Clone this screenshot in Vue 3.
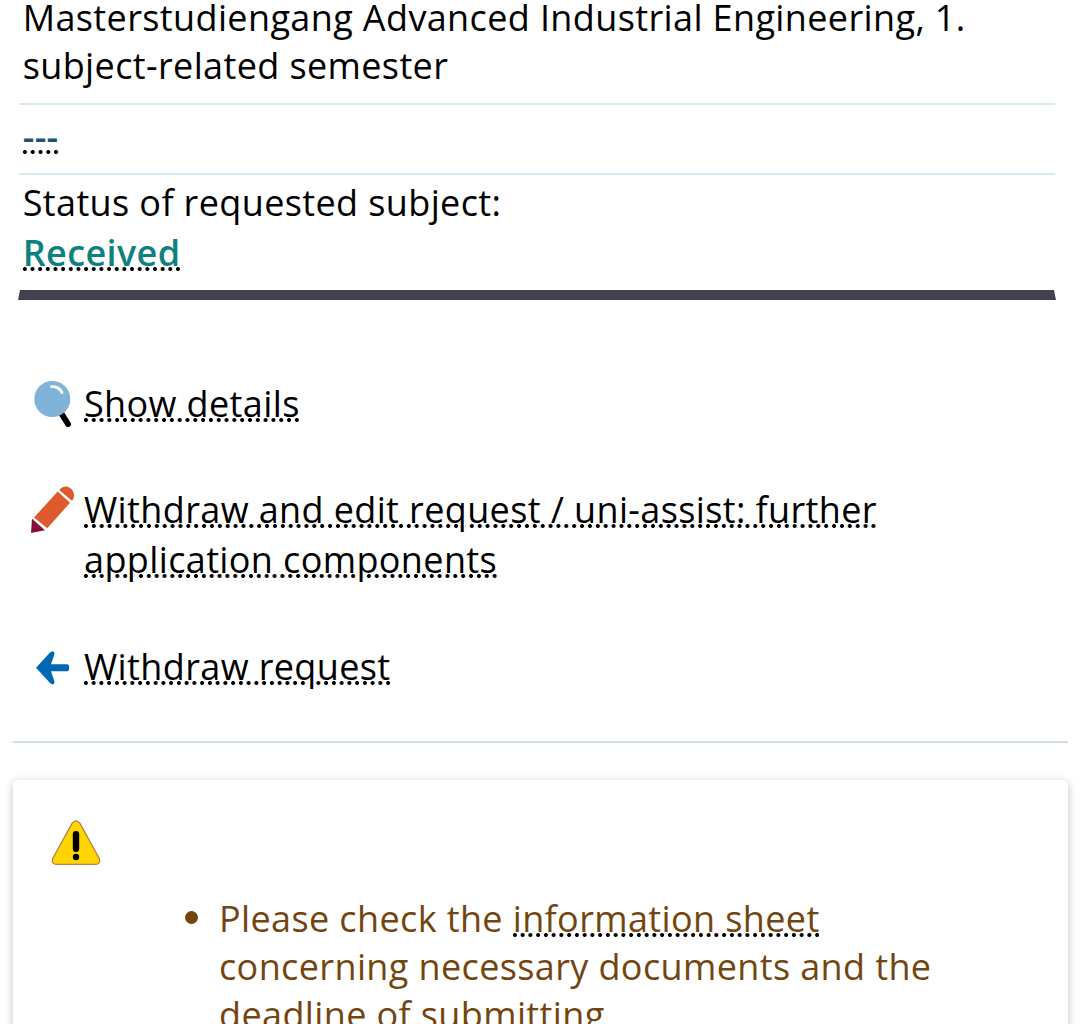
<script setup>
const actions = [
  { icon: 'search', label: 'Show details' },
  { icon: 'edit', label: 'Withdraw and edit request / uni-assist: further application components' },
  { icon: 'back', label: 'Withdraw request' }
];
</script>

<template>
  <main class="page">
    <section class="request">
      <div class="row subject">Masterstudiengang Advanced Industrial Engineering, 1. subject-related semester</div>
      <div class="row empty"><span class="dotted">---</span></div>
      <div class="row status">
        <div>Status of requested subject:</div>
        <div class="state"><span class="dotted">Received</span></div>
      </div>
    </section>

    <ul class="actions">
      <li v-for="action in actions" :key="action.icon" class="action">
        <svg v-if="action.icon === 'search'" class="icon" width="50" height="58" viewBox="0 0 50 58">
          <path d="M33 42l7 11" stroke="#000" stroke-width="6" stroke-linecap="round" />
          <circle cx="24.300" cy="28" r="18" fill="#80b3d8" />
          <path d="M23.500 15.500q7.500 0 10.500 6" stroke="#fff" stroke-width="3" stroke-linecap="round" fill="none" />
        </svg>
        <svg v-else-if="action.icon === 'edit'" class="icon" width="50" height="58" viewBox="0 0 50 58">
          <path d="M6 40.500L29.700 14.500 42 25.800 19.300 51.200z" fill="#dc5a2c" />
          <path d="M31.300 13C34 9.500 38.500 8.500 42 11C46 13.500 47 18.500 45 22.500Q44.300 23.800 43.300 23.200z" fill="#dc5a2c" />
          <path d="M4 41.800L17 53.200 3 56z" fill="#8b0a3d" />
        </svg>
        <svg v-else class="icon" width="50" height="58" viewBox="0 0 50 58">
          <path d="M8 33.700L22 18.500Q26.500 15.500 26.500 20L23 30.200H39Q41 30.200 41 32V35.500Q41 37.300 39 37.300H23L26.500 47.500Q26.500 52 22 49Z" fill="#0069b4" />
        </svg>
        <div class="label"><a class="dotted">{{ action.label }}</a></div>
      </li>
    </ul>

    <hr class="divider" />

    <section class="notice">
      <svg class="warning" width="50" height="46" viewBox="0 0 50 46">
        <path d="M21.200 3.200Q25-1.500 28.800 3.200L48.300 38.500Q50 44 45 44.300H5Q0 44 1.700 38.500Z" fill="#ffd500" stroke="#b58247" stroke-width="1.300" />
        <path d="M25 14.200v14.500" stroke="#000" stroke-width="6.400" stroke-linecap="round" />
        <circle cx="25" cy="37" r="3.200" />
      </svg>
      <ul class="hints">
        <li>Please check the <a class="dotted">information sheet</a> concerning necessary documents and the deadline of submitting</li>
      </ul>
    </section>
  </main>
</template>

<style>
body {
  margin: 0;
  background: #fff;
}
</style>

<style scoped>
.page {
  height: 1024px;
  overflow: hidden;
  box-sizing: border-box;
  font-family: "Open Sans", sans-serif;
  font-size: 36px;
  line-height: 48px;
  letter-spacing: 0.38px;
  color: #000;
  display: flow-root;
}

.request {
  margin: -6px 24px 0 18px;
  border: 2px solid transparent;
  border-top: 0;
  border-bottom: 10px solid #43414f;
}

.row {
  box-sizing: border-box;
  padding: 0 3px 0 3.7px;
  margin: 0 -1px;
  border-bottom: 2px solid #d9eaf3;
}

.subject {
  height: 111px;
}

.empty {
  height: 70px;
  padding-top: 8px;
  font-weight: 600;
  color: #1b5377;
}

.status {
  height: 115px;
  padding-top: 4px;
  border-bottom: 0;
}

.state {
  margin-top: 1px;
  line-height: 50px;
  font-weight: 600;
  color: #0d8080;
}

/* round dots, spaced evenly over each line of text */
.dotted {
  padding: 0 1.5px 0 2px;
  margin: 0 -1.5px 0 -2px;
  background-image: radial-gradient(circle at center, #000 1.6px, transparent 2.3px);
  background-size: 7.85px 4px;
  background-repeat: round no-repeat;
  background-position: 0 39px;
  -webkit-box-decoration-break: clone;
  box-decoration-break: clone;
  text-shadow: -2px 0 #fff, -1px 0 #fff, 1px 0 #fff, 2px 0 #fff;
}

.empty .dotted {
  background-size: 7.4px 4px;
  background-position: 0 38px;
}

.actions {
  margin: 79px 0 0;
  padding: 0 30px 0 28px;
  list-style: none;
  line-height: 50px;
}

.action {
  display: flex;
  gap: 6px;
  margin-bottom: 56.4px;
}

.icon {
  flex: none;
  margin: -8px 0 0;
  fill: none;
}

.label {
  width: 840px;
}

.divider {
  height: 2px;
  margin: -7.2px 12px 0 13px;
  border: 0;
  background: #cfe1ee;
}

.notice {
  margin: 37px 12px 0 13px;
  height: 300px;
  border-radius: 5px;
  background: #fff;
  box-shadow: 0 2px 9px rgba(0, 0, 0, 0.25);
  display: flow-root;
}

.warning {
  display: block;
  margin: 40px 0 0 38px;
}

.hints {
  margin: 29px 100px 0 206px;
  padding: 0;
  list-style: none;
  color: #734611;
}

.hints li::before {
  content: "";
  float: left;
  width: 13px;
  height: 13px;
  margin: 16px 21px 0 -34px;
  border-radius: 50%;
  background: #734611;
}
</style>
